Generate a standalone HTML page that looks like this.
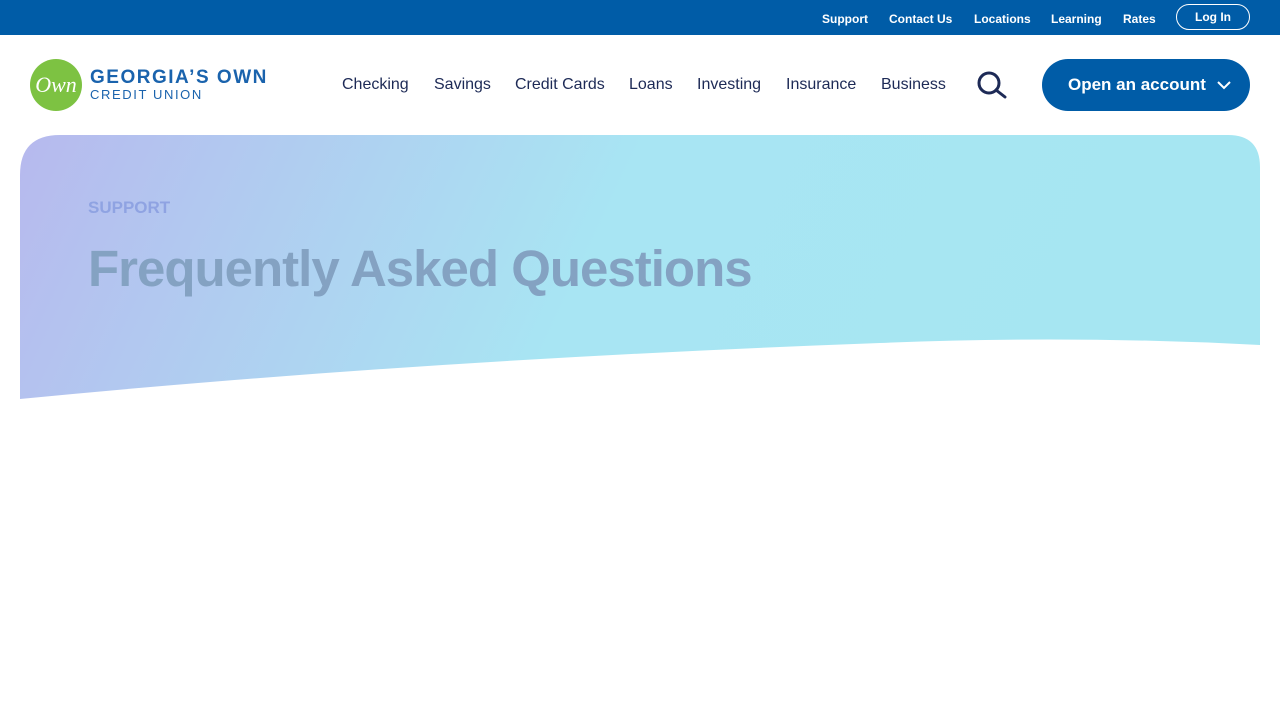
<!DOCTYPE html>
<html><head><meta charset="utf-8"><style>
*{margin:0;padding:0;box-sizing:border-box}
body{width:1280px;height:720px;background:#fff;font-family:"Liberation Sans",sans-serif;position:relative;overflow:hidden}
.top{position:absolute;left:0;top:0;width:1280px;height:35px;background:#005ca7}
.top span{position:absolute;top:12px;color:#fff;font-weight:bold;font-size:12px}
.login{position:absolute;left:1176px;top:4px;width:74px;height:26px;border:1px solid #fff;border-radius:13px;color:#fff;font-weight:bold;font-size:12px;text-align:center;line-height:24px}
.nav span{position:absolute;top:76px;font-size:16px;color:#1d2a56}
.btn{position:absolute;left:1042px;top:59px;width:208px;height:52px;border-radius:26px;background:#005ca7;color:#fff;font-weight:bold;font-size:17px;line-height:52px;padding-left:26px}
</style></head><body>
<div class="top">
<span style="left:822px">Support</span><span style="left:889px">Contact Us</span><span style="left:974px">Locations</span><span style="left:1051px">Learning</span><span style="left:1123px">Rates</span>
<div class="login">Log In</div>
</div>
<div style="position:absolute;left:30px;top:59px;width:52px;height:52px;border-radius:50%;background:#7dc242;color:#fff;font-family:'Liberation Serif',serif;font-style:italic;font-size:22px;text-align:center;line-height:52px">Own</div>
<div style="position:absolute;left:90px;top:67px;color:#1a63ad;font-size:19px;font-weight:bold;letter-spacing:1.5px">GEORGIA’S OWN</div>
<div style="position:absolute;left:90px;top:87px;color:#1a63ad;font-size:13px;letter-spacing:1.6px">CREDIT UNION</div>
<div class="nav">
<span style="left:342px">Checking</span><span style="left:434px">Savings</span><span style="left:515px">Credit Cards</span><span style="left:629px">Loans</span><span style="left:697px">Investing</span><span style="left:786px">Insurance</span><span style="left:881px">Business</span>
</div>
<svg style="position:absolute;left:976px;top:71px" width="34" height="30"><circle cx="13" cy="12" r="10" fill="none" stroke="#1d2a56" stroke-width="3"/><line x1="20" y1="19" x2="29" y2="26" stroke="#1d2a56" stroke-width="3" stroke-linecap="round"/></svg>
<div class="btn">Open an account <svg style="position:absolute;left:175px;top:21px" width="14" height="10"><path d="M1 2 L7 8 L13 2" fill="none" stroke="#fff" stroke-width="2"/></svg></div>
<svg style="position:absolute;left:20px;top:135px" width="1240" height="265">
<defs><linearGradient id="g" x1="0" x2="1" y1="0" y2="0.1"><stop offset="0" stop-color="#b7b9ee"/><stop offset="0.5" stop-color="#a8e5f3"/><stop offset="1" stop-color="#a6e6f2"/></linearGradient></defs>
<path d="M0 40 Q0 0 40 0 L1208 0 Q1240 0 1240 32 L1240 210 Q1050 200 860 208 Q400 225 0 264 Z" fill="url(#g)"/>
</svg>
<div style="position:absolute;left:88px;top:198px;font-size:17px;font-weight:bold;color:#8fa3e2">SUPPORT</div>
<div style="position:absolute;left:88px;top:239px;font-size:51px;font-weight:bold;color:#84a2c2;letter-spacing:-1px">Frequently Asked Questions</div>
</body></html>
